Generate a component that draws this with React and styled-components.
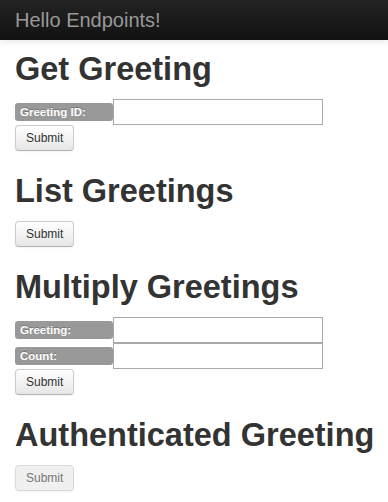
import styled, { createGlobalStyle } from "styled-components";

const GlobalStyle = createGlobalStyle`
  body {
    margin: 0;
    background: #fff;
    font-family: "Liberation Sans", Arial, sans-serif;
    color: #333;
  }
`;

const sections = [
  { title: "Get Greeting", fields: ["Greeting ID:"] },
  { title: "List Greetings", fields: [] },
  { title: "Multiply Greetings", fields: ["Greeting:", "Count:"] },
  { title: "Authenticated Greeting", fields: [], disabled: true },
];

const App = () => {
  return (
    <>
      <GlobalStyle />
      <Navbar>
        <Brand>Hello Endpoints!</Brand>
      </Navbar>
      <Container>
        {sections.map((section) => (
          <Section key={section.title}>
            <Heading>{section.title}</Heading>
            <Form onSubmit={(e) => e.preventDefault()}>
              {section.fields.map((field) => (
                <Row key={field}>
                  <Label>{field}</Label>
                  <Input type="text" />
                </Row>
              ))}
              <Button type="submit" disabled={section.disabled}>
                Submit
              </Button>
            </Form>
          </Section>
        ))}
      </Container>
    </>
  );
};

const Navbar = styled.div`
  height: 40px;
  display: flex;
  align-items: center;
  padding: 0 15px;
  background: linear-gradient(to bottom, #242424, #111111);
  box-shadow: 0 1px 8px rgba(0, 0, 0, 0.12);
`;

const Brand = styled.span`
  font-size: 20px;
  color: #999;
  line-height: 40px;
`;

const Container = styled.div`
  padding: 0 15px;
`;

const Section = styled.div``;

const Heading = styled.h1`
  margin: 9px 0 10px;
  font-size: 32.5px;
  line-height: 40px;
  font-weight: bold;
  color: #333;
  white-space: nowrap;
`;

const Form = styled.form`
  margin: 0 0 20px;
  display: flex;
  flex-direction: column;
  align-items: flex-start;
`;

const Row = styled.div`
  display: flex;
  align-items: center;
`;

const Label = styled.span`
  box-sizing: border-box;
  width: 98px;
  height: 18px;
  padding: 0 5px;
  border-radius: 3px;
  background: #999;
  color: #fff;
  font-size: 11.5px;
  font-weight: bold;
  line-height: 18px;
  text-shadow: 0 -1px 0 rgba(0, 0, 0, 0.25);
`;

const Input = styled.input`
  box-sizing: border-box;
  width: 210px;
  height: 26px;
  margin: 0;
  padding: 2px 4px;
  border: 1px solid #a9a9a9;
  border-radius: 0;
  font-family: inherit;
  font-size: 13px;
`;

const Button = styled.button`
  box-sizing: border-box;
  height: 26px;
  margin: 0;
  padding: 3px 10px;
  font-family: inherit;
  font-size: 12px;
  line-height: 18px;
  color: #333;
  background: linear-gradient(to bottom, #ffffff, #e6e6e6);
  border: 1px solid #ccc;
  border-bottom-color: #b3b3b3;
  border-radius: 4px;
  box-shadow: inset 0 1px 0 rgba(255, 255, 255, 0.2), 0 1px 2px rgba(0, 0, 0, 0.05);
  cursor: pointer;

  &:disabled {
    background: #f0f0f0;
    color: #777;
    border-color: #d9d9d9;
    cursor: default;
  }
`;

export default App;
